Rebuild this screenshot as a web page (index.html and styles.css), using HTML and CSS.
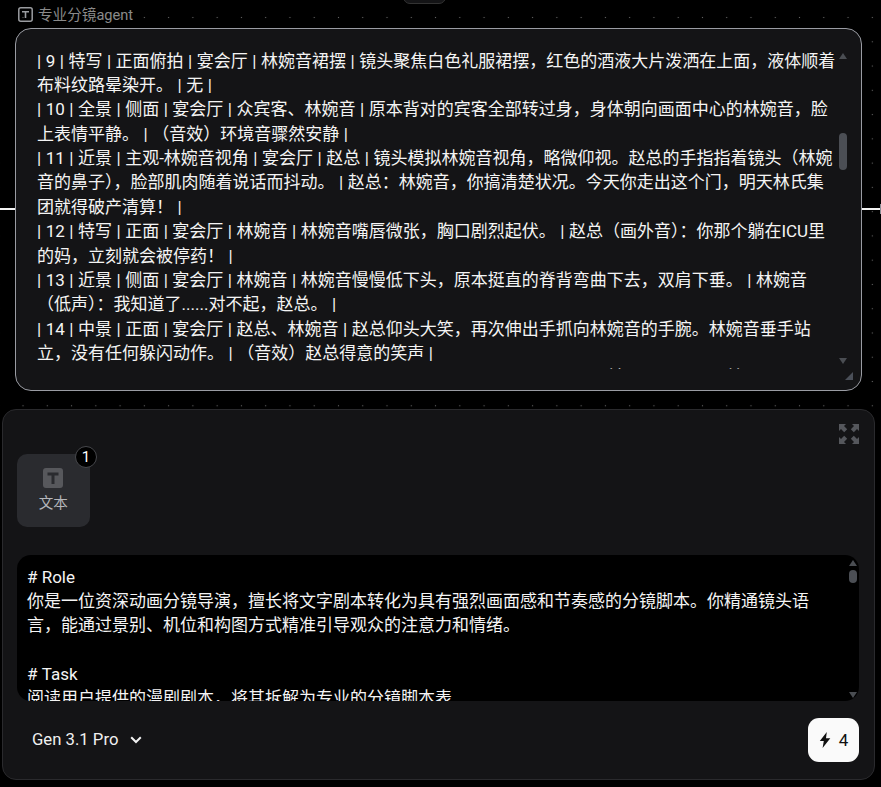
FILE: index.html
```html
<!DOCTYPE html>
<html lang="zh-CN">
<head>
<meta charset="utf-8">
<title>专业分镜agent</title>
<link rel="stylesheet" href="styles.css">
</head>
<body>
<div class="canvas">
  <div class="top-stub"></div>
  <div class="wire wire-left"></div>
  <div class="wire wire-right"></div>
  <div class="wire-cap"></div>

  <header class="node-label">
    <svg class="label-icon" viewBox="0 0 15 15" width="15" height="15"><rect x=".8" y=".8" width="13.400" height="13.400" rx="2" fill="none" stroke="#9a9ca0" stroke-width="1.500"/><path d="M4 4.700h7M7.500 4.700v6.300" fill="none" stroke="#9a9ca0" stroke-width="1.600"/></svg>
    <span>专业分镜agent</span>
  </header>

  <section class="result-panel">
    <div class="result-text">| 9 | 特写 | 正面俯拍 | 宴会厅 | 林婉音裙摆 | 镜头聚焦白色礼服裙摆，红色的酒液大片泼洒在上面，液体顺着<br>布料纹路晕染开。 | 无 |<br>| 10 | 全景 | 侧面 | 宴会厅 | 众宾客、林婉音 | 原本背对的宾客全部转过身，身体朝向画面中心的林婉音，脸<br>上表情平静。 | （音效）环境音骤然安静 |<br>| 11 | 近景 | 主观-林婉音视角 | 宴会厅 | 赵总 | 镜头模拟林婉音视角，略微仰视。赵总的手指指着镜头（林婉<br>音的鼻子），脸部肌肉随着说话而抖动。 | 赵总：林婉音，你搞清楚状况。今天你走出这个门，明天林氏集<br>团就得破产清算！ |<br>| 12 | 特写 | 正面 | 宴会厅 | 林婉音 | 林婉音嘴唇微张，胸口剧烈起伏。 | 赵总（画外音）：你那个躺在ICU里<br>的妈，立刻就会被停药！ |<br>| 13 | 近景 | 侧面 | 宴会厅 | 林婉音 | 林婉音慢慢低下头，原本挺直的脊背弯曲下去，双肩下垂。 | 林婉音<br>（低声）：我知道了......对不起，赵总。 |<br>| 14 | 中景 | 正面 | 宴会厅 | 赵总、林婉音 | 赵总仰头大笑，再次伸出手抓向林婉音的手腕。林婉音垂手站<br>立，没有任何躲闪动作。 | （音效）赵总得意的笑声 |<br><span class="below-fold">| 15 | 特写 | 正面 | 宴会厅 | 林婉音 | 林婉音的手指慢慢松开，手中的酒杯滑落</span>前<span class="below-fold">地面碎裂声响</span>首</div>
    <svg class="arrow arrow-up-main" viewBox="0 0 8 6" width="8" height="6"><path d="M4 0l4 6H0z" fill="#4a4d52"/></svg>
    <div class="thumb thumb-main"></div>
    <svg class="arrow arrow-down-main" viewBox="0 0 8 6" width="8" height="6"><path d="M0 0h8L4 6z" fill="#4a4d52"/></svg>
    <svg class="resize-grip" viewBox="0 0 8 8" width="8" height="8"><path d="M8 0v8H0z" fill="#4a4f58"/></svg>
  </section>

  <section class="config-panel">
    <svg class="expand" viewBox="0 0 20 20" width="20" height="20"><g fill="#55575c"><path d="M0 0h7L5 2l3.200 3.200-3 3L2 5 0 7z"/><path d="M20 0h-7l2 2-3.200 3.200 3 3L18 5l2 2z"/><path d="M0 20h7l-2-2 3.200-3.200-3-3L2 15l-2-2z"/><path d="M20 20h-7l2-2-3.200-3.200 3-3L18 15l2-2z"/></g></svg>
    <div class="attachments">
      <div class="attach-card">
        <svg viewBox="0 0 20 20" width="20" height="20"><rect width="20" height="20" rx="3" fill="#57585c"/><path d="M4.500 4.500h11v3h-4v8.500h-3V7.500h-4z" fill="#2a2b2f"/></svg>
        <span class="attach-name">文本</span>
        <span class="badge">1</span>
      </div>
    </div>
    <div class="prompt">
      <div class="prompt-text"># Role<br>你是一位资深动画分镜导演，擅长将文字剧本转化为具有强烈画面感和节奏感的分镜脚本。你精通镜头语<br>言，能通过景别、机位和构图方式精准引导观众的注意力和情绪。<br><br># Task<br>阅读用户提供的漫剧剧本，将其拆解为专业的分镜脚本表</div>
      <svg class="arrow arrow-up-prompt" viewBox="0 0 8 6" width="8" height="6"><path d="M4 0l4 6H0z" fill="#4a4d52"/></svg>
      <div class="thumb thumb-prompt"></div>
      <svg class="arrow arrow-down-prompt" viewBox="0 0 8 6" width="8" height="6"><path d="M0 0h8L4 6z" fill="#4a4d52"/></svg>
    </div>
    <footer class="config-footer">
      <div class="model">
        <span>Gen 3.1 Pro</span>
        <svg viewBox="0 0 12 8" width="12" height="8"><path d="M1.200 1.300L6 6l4.800-4.700" fill="none" stroke="#f2f2f2" stroke-width="2"/></svg>
      </div>
      <button class="run" type="button">
        <svg viewBox="0 0 12 16" width="12" height="16"><path d="M7.800 0L.8 9h4L3.600 16 11.300 6.200H7z" fill="#111"/></svg>
        <span>4</span>
      </button>
    </footer>
  </section>
</div>
</body>
</html>
```
FILE: styles.css
```css
* { box-sizing: border-box; }
html, body { margin: 0; padding: 0; background: #000; }
body { font-family: Roboto, "Noto Sans CJK SC", sans-serif; }
.canvas {
  position: relative;
  width: 881px;
  height: 787px;
  overflow: hidden;
  background-color: #000;
  background-image: radial-gradient(circle at center, #666 0, #555 .6px, transparent 1px);
  background-size: 24.27px 24.27px;
  background-position: 10.9px 5.4px;
}
.top-stub {
  position: absolute;
  left: 403px;
  top: -10px;
  width: 43px;
  height: 14px;
  border: 1px solid #333;
  border-radius: 8px;
  background: #141416;
}
.wire { position: absolute; top: 208px; height: 2px; background: #f4f4f4; }
.wire-left { left: 0; width: 15px; }
.wire-right { left: 861px; width: 19px; }
.wire-cap { position: absolute; left: 880px; top: 204px; width: 1px; height: 10px; background: #8c8f96; }
.node-label {
  display: flex;
  align-items: center;
  gap: 5px;
  height: 28px;
  padding: 2px 0 0 18px;
  color: #8a8a8a;
  font-size: 14.6px;
  line-height: 28px;
}
.label-icon { flex: none; margin-top: -2px; }
.result-panel {
  position: relative;
  width: 846.5px;
  height: 362.5px;
  margin-left: 15px;
  padding: 19.6px 0 0 21px;
  border: 1.5px solid #9a9ca3;
  border-radius: 16px;
  background: #141416;
}
.result-text {
  height: 320px;
  overflow: hidden;
  color: #f4f4f4;
  font-size: 17px;
  line-height: 24.375px;
  word-spacing: .3px;
  white-space: nowrap;
}
.below-fold { visibility: hidden; }
.arrow { position: absolute; }
.arrow-up-main { left: 822.500px; top: 24px; }
.arrow-down-main { left: 822.500px; top: 329px; }
.resize-grip { position: absolute; left: 829px; top: 343px; }
.thumb { position: absolute; background: #4b4e54; border-radius: 4px; }
.thumb-main { left: 823px; top: 103.500px; width: 8px; height: 37px; }
.config-panel {
  display: flex;
  flex-direction: column;
  position: relative;
  width: 873px;
  height: 370.5px;
  margin: 18.500px 0 0 2px;
  padding: 44px 14px 0;
  border: 1px solid #2a2a2d;
  border-radius: 14px;
  background: #141416;
}
.expand { position: absolute; left: 836px; top: 14px; }
.attachments { display: flex; height: 101px; }
.attach-card {
  position: relative;
  display: flex;
  flex-direction: column;
  align-items: center;
  gap: 3px;
  width: 72.500px;
  height: 72.500px;
  padding-top: 14px;
  border-radius: 10px;
  background: #2a2b2f;
}
.attach-name { color: #b4b6ba; font-size: 14.600px; line-height: 24px; }
.badge {
  position: absolute;
  left: 58px;
  top: -8px;
  display: flex;
  align-items: center;
  justify-content: center;
  width: 22px;
  height: 22px;
  border: 1.500px solid #46474b;
  border-radius: 50%;
  background: #000;
  color: #fff;
  font-size: 15px;
  line-height: 1;
}
.prompt {
  position: relative;
  width: 842px;
  height: 146px;
  border-radius: 14px;
  background: #000;
  overflow: hidden;
}
.prompt-text {
  padding: 9.500px 0 0 10px;
  color: #f4f4f4;
  font-size: 17px;
  line-height: 24.375px;
  white-space: nowrap;
}
.arrow-up-prompt { left: 832px; top: 5px; }
.arrow-down-prompt { left: 832px; top: 137px; }
.thumb-prompt { left: 832px; top: 15px; width: 8px; height: 13px; }
.config-footer {
  display: flex;
  align-items: center;
  justify-content: space-between;
  width: 842px;
  height: 77px;
  padding: 0 0 0 15px;
}
.model {
  display: flex;
  align-items: center;
  gap: 12px;
  color: #f0f0f0;
  font-size: 16.700px;
}
.run {
  display: flex;
  align-items: center;
  justify-content: center;
  gap: 8px;
  width: 51px;
  height: 44px;
  padding: 0;
  border: 0;
  border-radius: 11px;
  background: #fafafa;
  color: #111;
  font-family: inherit;
  font-size: 17px;
}
```
